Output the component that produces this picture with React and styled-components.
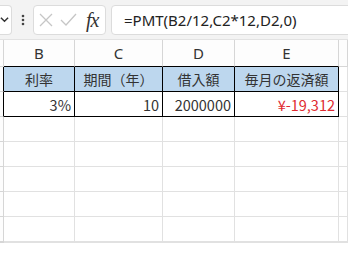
import React from "react";
import styled, { createGlobalStyle } from "styled-components";

const Global = createGlobalStyle`
  body {
    margin: 0;
    background: #ffffff;
    font-family: "Noto Sans CJK JP", "Noto Sans", sans-serif;
    overflow: hidden;
  }
`;

const Page = styled.div`
  width: 348px;
  height: 260px;
  overflow: hidden;
  display: flex;
  flex-direction: column;
`;

/* formula bar */
const Toolbar = styled.div`
  height: 40px;
  box-sizing: border-box;
  background: #f3f3f3;
  border-bottom: 1px solid #e2e2e2;
  display: flex;
  align-items: center;
  flex-shrink: 0;
`;

const NameBox = styled.div`
  width: 12px;
  height: 30px;
  box-sizing: border-box;
  background: #fff;
  border: 1px solid #dcdcdc;
  border-left: none;
  border-radius: 0 4px 4px 0;
  display: flex;
  align-items: center;
  justify-content: flex-start;
`;

const Dots = styled.div`
  width: 21px;
  display: flex;
  justify-content: center;
`;

const FxBox = styled.div`
  width: 73px;
  height: 30px;
  box-sizing: border-box;
  background: #fff;
  border: 1px solid #dcdcdc;
  border-radius: 4px;
  display: flex;
  align-items: center;
  padding-left: 5px;
  gap: 7px;
`;

const Fx = styled.span`
  font-family: "Liberation Serif", serif;
  font-style: italic;
  font-size: 20px;
  line-height: 1;
  color: #333;
  margin-left: 2px;
  letter-spacing: -1px;
`;

const FormulaBox = styled.div`
  flex: 1;
  margin-left: 5px;
  margin-right: -10px;
  height: 30px;
  box-sizing: border-box;
  background: #fff;
  border: 1px solid #dcdcdc;
  border-radius: 4px;
  display: flex;
  align-items: center;
  padding-left: 12px;
  font-family: "Noto Sans", "Liberation Sans", sans-serif;
  font-size: 15px;
  color: #222;
`;

/* sheet grid */
const Grid = styled.div`
  display: grid;
  grid-template-columns: 4px 71px 88px 72px 104px 1fr;
  grid-template-rows: 27px repeat(7, 25px);
`;

const ColHead = styled.div`
  box-sizing: border-box;
  background: #fdfdfd;
  border-right: 1px solid #d6d6d6;
  border-bottom: 1px solid ${(p) => (p.$dark ? "#000" : "#d6d6d6")};
  display: flex;
  align-items: center;
  justify-content: center;
  font-family: "Noto Sans", "Liberation Sans", sans-serif;
  font-size: 15px;
  color: #333;
`;

const Cell = styled.div`
  box-sizing: border-box;
  background: ${(p) => (p.$fill ? "#bdd7ee" : "#fff")};
  border-right: 1px solid ${(p) => (p.$dark ? "#000" : "#e1e1e1")};
  border-bottom: 1px solid ${(p) => (p.$dark ? "#000" : "#e1e1e1")};
  display: flex;
  align-items: center;
  justify-content: ${(p) => (p.$align === "right" ? "flex-end" : "center")};
  padding: 0 3px;
  font-size: 14px;
  color: ${(p) => (p.$red ? "#e02a30" : "#333")};
  white-space: nowrap;
  overflow: hidden;
`;

const RowEdge = styled.div`
  box-sizing: border-box;
  background: #fdfdfd;
  border-right: 1px solid ${(p) => (p.$dark ? "#000" : "#d6d6d6")};
  border-bottom: 1px solid #d6d6d6;
`;

const Num = styled.span`
  font-family: "Noto Sans CJK JP", "Noto Sans", sans-serif;
  font-size: 14.5px;
`;

const columns = ["B", "C", "D", "E"];
const header = ["利率", "期間（年）", "借入額", "毎月の返済額"];
const values = ["3%", "10", "2000000", "¥-19,312"];

export default function App() {
  return (
    <Page>
      <Global />
      <Toolbar>
        <NameBox>
          <svg width="9" height="9" viewBox="0 0 10 10">
            <path d="M1 3 L5 7 L9 3" fill="none" stroke="#333" strokeWidth="1.6" />
          </svg>
        </NameBox>
        <Dots>
          <svg width="4" height="12" viewBox="0 0 4 12">
            <circle cx="2" cy="2" r="1.3" fill="#444" />
            <circle cx="2" cy="6" r="1.3" fill="#444" />
            <circle cx="2" cy="10" r="1.3" fill="#444" />
          </svg>
        </Dots>
        <FxBox>
          <svg width="14" height="14" viewBox="0 0 14 14">
            <path d="M1 1 L13 13 M13 1 L1 13" stroke="#c6c6c6" strokeWidth="1.3" />
          </svg>
          <svg width="17" height="14" viewBox="0 0 17 14">
            <path d="M1 7 L6 12 L16 1" fill="none" stroke="#c6c6c6" strokeWidth="1.3" />
          </svg>
          <Fx>fx</Fx>
        </FxBox>
        <FormulaBox>=PMT(B2/12,C2*12,D2,0)</FormulaBox>
      </Toolbar>
      <Grid>
        <ColHead />
        {columns.map((c) => (
          <ColHead key={c} $dark>
            {c}
          </ColHead>
        ))}
        <ColHead />

        <RowEdge $dark />
        {header.map((h) => (
          <Cell key={h} $fill $dark>
            {h}
          </Cell>
        ))}
        <Cell />

        <RowEdge $dark />
        {values.map((v, i) => (
          <Cell key={v} $dark $align="right" $red={i === 3}>
            <Num>{v}</Num>
          </Cell>
        ))}
        <Cell />

        {[0, 1, 2, 3, 4, 5].map((r) => (
          <React.Fragment key={r}>
            <RowEdge />
            <Cell />
            <Cell />
            <Cell />
            <Cell />
            <Cell />
          </React.Fragment>
        ))}
      </Grid>
    </Page>
  );
}
